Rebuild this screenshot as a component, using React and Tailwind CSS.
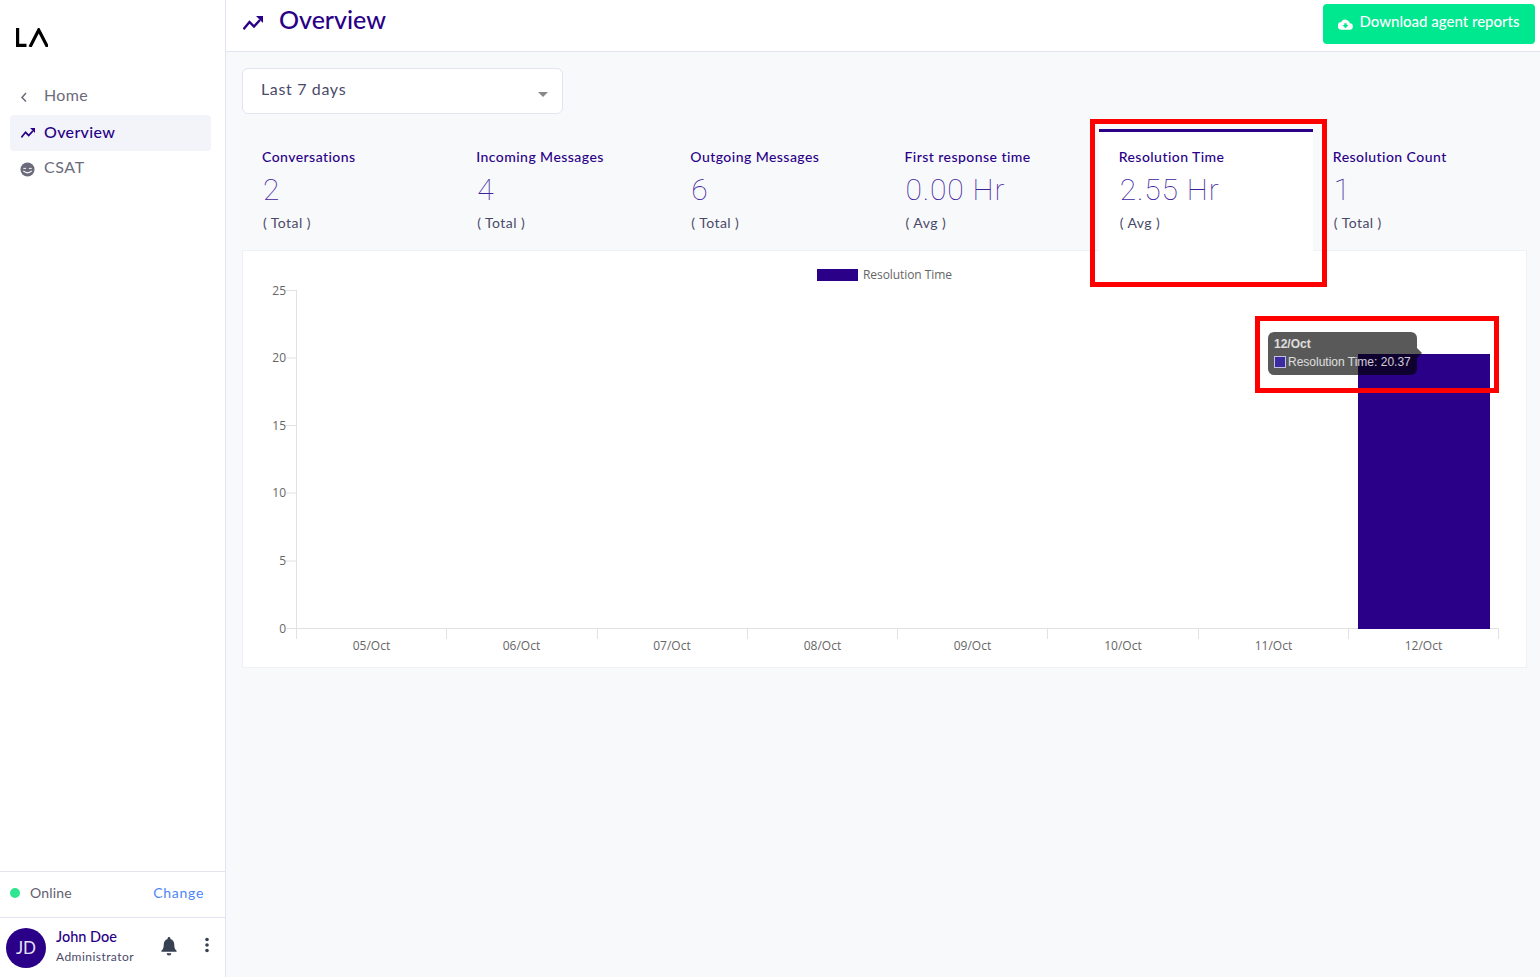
import React from "react";

const PURPLE = "#290087";

function Trend({ width = 20, height = 14, className = "" }) {
  return (
    <svg width={width} height={height} viewBox="0 0 20 14" fill="none" className={className}>
      <path d="M0.500 13.200L6.500 6l4.500 4.500L17 4" stroke="currentColor" strokeWidth="2.400" />
      <path d="M13 0h7v7z" fill="currentColor" />
    </svg>
  );
}

function Metric({ title, value, unit, sub, active }) {
  return (
    <div className={`w-[214.2px] h-[122px] pl-5 pt-[16px] border-t-[3px] ${active ? "bg-white border-[#290087]" : "border-transparent"}`}>
      <div className="text-[14px] leading-[18px] font-medium text-[#290087] tracking-[0.45px]">{title}</div>
      <div className="mt-[7px] ml-[1px] h-[32px] text-[30px] leading-[34px] text-[#3d22a0] font-['Roboto',sans-serif] font-thin tracking-[0.85px]">
        {value}{unit ? <span className="ml-2">{unit}</span> : null}
      </div>
      <div className="mt-[9px] ml-[1px] text-[14px] leading-[18px] text-[#4a4a68] tracking-[0.45px]">( {sub} )</div>
    </div>
  );
}

const yTicks = [[25, 290.5], [20, 358], [15, 425.5], [10, 493], [5, 561], [0, 628.5]];
const xTicks = [296.5, 446.5, 597.5, 747.5, 897.5, 1047.5, 1198.5, 1348.5, 1498.5];
const xLabels = [["05/Oct", 371.5], ["06/Oct", 521.5], ["07/Oct", 672], ["08/Oct", 822.5], ["09/Oct", 972.5], ["10/Oct", 1123], ["11/Oct", 1273.5], ["12/Oct", 1423.5]];

function Chart() {
  const ox = 243, oy = 251;
  return (
    <svg width="1283" height="416" viewBox={`${ox} ${oy} 1283 416`} className="block" style={{ fontFamily: "'Open Sans', sans-serif" }}>
      <rect x="817" y="269" width="41" height="12" fill={PURPLE} />
      <text x="863" y="279" fontSize="12" fill="#666" textLength="89">Resolution Time</text>
      {yTicks.map(([v, y]) => (
        <g key={v}>
          <line x1="286" x2="297" y1={y} y2={y} stroke="#e2e2e2" />
          <text x="286" y={y + 4} fontSize="12" fill="#666" textAnchor="end">{v}</text>
        </g>
      ))}
      <line x1="296.5" x2="296.5" y1="290" y2="629" stroke="#e2e2e2" />
      <line x1="296" x2="1499" y1="628.5" y2="628.5" stroke="#e2e2e2" />
      {xTicks.map((x) => <line key={x} x1={x} x2={x} y1="628" y2="639" stroke="#e2e2e2" />)}
      {xLabels.map(([l, x]) => <text key={l} x={x} y="650" fontSize="12" fill="#666" textAnchor="middle">{l}</text>)}
      <rect x="1358" y="354" width="132" height="275" fill={PURPLE} />
    </svg>
  );
}

export default function App() {
  return (
    <div className="relative flex w-[1540px] h-[977px] overflow-hidden bg-[#f8f9fb] font-['Lato','Noto_Sans',sans-serif]">
      <aside className="w-[226px] shrink-0 bg-white border-r border-[#e2e5f0] flex flex-col">
        <div className="h-[79px] pl-[16px] pt-[28px]">
          <svg width="32" height="19" viewBox="0 0 32 19" fill="none" stroke="#000" strokeWidth="3.200">
            <path d="M1.600 0v17.400H10.500" />
            <path d="M14 19L22.700 2 31.500 19" />
          </svg>
        </div>
        <nav className="pl-[10px] pr-[14px] flex-1 flex flex-col text-[16px] tracking-[0.35px]">
          <div className="h-[36px] flex items-center text-[#6b6b7b]">
            <svg width="12" height="12" viewBox="0 0 12 12" fill="none" stroke="#6b6b7b" strokeWidth="1.500" className="ml-[8px]"><path d="M8 2L4 6.500l4 4" /></svg>
            <span className="ml-[14px] -mt-[5px]">Home</span>
          </div>
          <div className="h-[36px] flex items-center bg-[#f3f4fa] rounded text-[#290087] font-medium">
            <Trend width={14} height={10} className="ml-[11px] text-[#290087]" />
            <span className="ml-[9px] -mt-[3px]">Overview</span>
          </div>
          <div className="h-[36px] flex items-center text-[#6b6b7b]">
            <svg width="15" height="15" viewBox="0 0 16 16" className="ml-[10px]">
              <circle cx="8" cy="8" r="7.500" fill="#6b6b7b" />
              <path d="M3.500 6.800h3M9.500 6.800h3" stroke="#fff" strokeWidth="1" />
              <path d="M3.500 9.500q4.500 4 9 0" stroke="#fff" strokeWidth="1.300" fill="none" />
            </svg>
            <span className="ml-[9px] -mt-[5px] tracking-[0.6px]">CSAT</span>
          </div>
        </nav>
        <div className="h-[46px] border-t border-[#e2e5f0] flex items-center pl-[10px] pr-[21px] text-[14px] tracking-[0.2px]">
          <span className="w-[10px] h-[10px] rounded-full bg-[#2ee68f] -mt-[3px]" />
          <span className="ml-[10px] text-[#5f5f70] -mt-[4px]">Online</span>
          <span className="ml-auto text-[#4d86f7] tracking-[0.7px] -mt-[4px]">Change</span>
        </div>
        <div className="h-[60px] border-t border-[#e2e5f0] flex items-center pl-[6px] pr-[16px]">
          <div className="w-[40px] h-[40px] rounded-full bg-[#290087] text-[#e6e0f5] text-[17px] flex items-center justify-center">JD</div>
          <div className="ml-[10px] -mt-[3px]">
            <div className="text-[14.500px] leading-[18px] text-[#290087] font-medium">John Doe</div>
            <div className="text-[12px] leading-[16px] mt-[3px] text-[#4a4a68] tracking-[0.45px]">Administrator</div>
          </div>
          <svg width="18" height="19" viewBox="0 0 18 20" className="ml-auto -mt-[3px]" fill="#374151">
            <path d="M9 0a1.500 1.500 0 0 0-1.500 1.500v.6C5 2.800 3.500 5 3.500 7.500c0 4-1 5.500-2.500 7v1h16v-1c-1.500-1.500-2.500-3-2.500-7 0-2.500-1.500-4.700-4-5.400v-.6A1.500 1.500 0 0 0 9 0zM6.500 17a2.500 2.500 0 0 0 5 0z" />
          </svg>
          <svg width="4" height="16" viewBox="0 0 4 16" className="ml-[27px] -mt-[5px]" fill="#374151">
            <circle cx="2" cy="2.500" r="1.800" /><circle cx="2" cy="8" r="1.800" /><circle cx="2" cy="13.500" r="1.800" />
          </svg>
        </div>
      </aside>

      <main className="flex-1 min-w-0 flex flex-col">
        <header className="h-[52px] shrink-0 bg-white border-b border-[#e2e5f0] flex items-start pl-[17px] pr-[5px]">
          <Trend width={20} height={14} className="mt-[16px] text-[#290087]" />
          <h1 className="ml-[16px] text-[25px] leading-[40px] -mt-[1px] text-[#290087] font-medium">Overview</h1>
          <button className="ml-auto mt-[4px] w-[212px] h-[40px] bg-[#00e88f] rounded text-white text-[15px] font-medium flex items-center justify-center">
            <svg width="15" height="11" viewBox="0 0 24 18" fill="#fff" className="mr-[6px]">
              <path d="M19 7A7.500 7.500 0 0 0 5 5a6 6 0 0 0 1 12.500h12.500A5 5 0 0 0 19 7zm-7 8l-5-5h3V7h4v3h3z" />
            </svg>
            <span className="-mt-[5px]">Download agent reports</span>
          </button>
        </header>

        <div className="pl-[16px] pr-[13px] pt-[16px]">
          <div className="w-[321px] h-[46px] bg-white border border-[#e2e5f0] rounded-md flex items-center pl-[18px] pr-[14px] text-[16px] text-[#4a4a68] tracking-[0.65px]">
            <span className="-mt-[5px]">Last 7 days</span>
            <span className="ml-auto mt-[6px] w-0 h-0 border-x-[5px] border-x-transparent border-t-[5px] border-t-[#888]" />
          </div>

          <div className="flex mt-[15px] w-[1285px] relative z-10 -mb-[1px]">
            <Metric title="Conversations" value="2" sub="Total" />
            <Metric title="Incoming Messages" value="4" sub="Total" />
            <Metric title="Outgoing Messages" value="6" sub="Total" />
            <Metric title="First response time" value="0.00" unit="Hr" sub="Avg" />
            <Metric title="Resolution Time" value="2.55" unit="Hr" sub="Avg" active />
            <Metric title="Resolution Count" value="1" sub="Total" />
          </div>

          <div className="w-[1285px] h-[418px] bg-white border border-[#eef2f6] relative">
            <Chart />
            <div className="absolute left-[1025px] top-[81px] w-[149px] h-[43px] bg-black/65 rounded-md text-white/80 font-['Liberation_Sans',sans-serif] text-[12px] pl-[6px] pt-[5px]">
              <span className="absolute -right-[5px] top-[16px] w-0 h-0 border-y-[5px] border-y-transparent border-l-[5px] border-l-black/65" />
              <div className="font-bold leading-[14px]">12/Oct</div>
              <div className="flex items-center mt-[4px] leading-[14px]">
                <span className="w-[12px] h-[12px] bg-[#3a2ba0] border border-white/70 mr-[2px]" />
                Resolution Time: 20.37
              </div>
            </div>
          </div>
        </div>
      </main>

      <div className="absolute left-[1090px] top-[119px] w-[237px] h-[168px] border-[5px] border-[#ff0000] z-20" />
      <div className="absolute left-[1255px] top-[316px] w-[244px] h-[77px] border-[5px] border-[#ff0000] z-20" />
    </div>
  );
}
